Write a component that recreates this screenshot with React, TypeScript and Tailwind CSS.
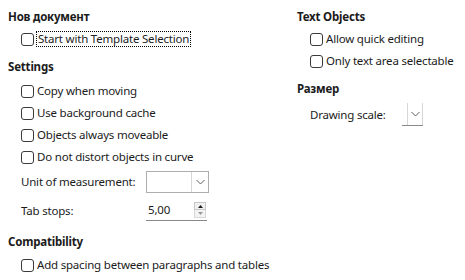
import React from 'react';

function Check({ label, focus = false }: { label: string; focus?: boolean }) {
  return (
    <div className="flex h-[22px] items-center pl-[13px]">
      <span className="h-[13px] w-[13px] shrink-0 rounded-[3px] border border-[#3a3a3a] bg-white" />
      {focus ? (
        <span className="ml-[2px] border border-dotted border-black px-[1px] leading-[14px]">{label}</span>
      ) : (
        <span className="ml-[3px]">{label}</span>
      )}
    </div>
  );
}

function Heading({ children, className = '' }: { children: React.ReactNode; className?: string }) {
  return <div className={`flex h-[22px] items-center font-bold ${className}`}>{children}</div>;
}

function Chevron() {
  return (
    <svg width="9" height="6" viewBox="0 0 9 6" className="text-[#606060]">
      <path d="M0.5 1 L4.5 5 L8.5 1" fill="none" stroke="currentColor" strokeWidth="1" />
    </svg>
  );
}

export default function App() {
  return (
    <div
      className="flex h-[280px] w-[465px] bg-white text-[11.5px] tracking-[-0.2px] text-[#1b1b1b]"
      style={{ fontFamily: '"Noto Sans", "Open Sans", sans-serif' }}
    >
      <div className="flex w-[289px] flex-col pl-2 pt-[6px]">
        <Heading>Нов документ</Heading>
        <Check label="Start with Template Selection" focus />
        <Heading className="mt-[6px]">Settings</Heading>
        <div className="mt-[2px]">
          <Check label="Copy when moving" />
          <Check label="Use background cache" />
          <Check label="Objects always moveable" />
          <Check label="Do not distort objects in curve" />
        </div>
        <div className="mt-[3px] flex h-[22px] items-center pl-[13px]">
          <span className="w-[125px]">Unit of measurement:</span>
          <div className="flex h-[22px] w-[63px] border border-[#adadad] bg-white">
            <div className="flex-1" />
            <div className="flex w-[17px] items-center justify-center border-l border-[#d6d6d6]">
              <Chevron />
            </div>
          </div>
        </div>
        <div className="mt-[7px] flex h-[21px] items-center pl-[13px]">
          <span className="w-[125px]">Tab stops:</span>
          <div className="flex h-[21px] w-[61px] items-center border-b border-[#8a8a8a] bg-white">
            <span className="flex-1 pl-[2px]">5,00</span>
            <div className="mr-[1px] flex w-[12px] flex-col">
              <div className="flex h-[8px] items-center justify-center border border-[#c8c8c8] bg-[#f0f0f0]">
                <svg width="5" height="3" viewBox="0 0 5 3">
                  <path d="M0 3 L2.5 0 L5 3 Z" fill="#1b1b1b" />
                </svg>
              </div>
              <div className="flex h-[8px] items-center justify-center border border-t-0 border-[#d8d8d8] bg-[#f3f3f3]">
                <svg width="5" height="3" viewBox="0 0 5 3">
                  <path d="M0 0 L2.5 3 L5 0 Z" fill="#9a9a9a" />
                </svg>
              </div>
            </div>
          </div>
        </div>
        <Heading className="mt-[10px]">Compatibility</Heading>
        <div className="mt-[1px]">
          <Check label="Add spacing between paragraphs and tables" />
        </div>
      </div>

      <div className="flex flex-1 flex-col pl-2 pt-[6px]">
        <Heading>Text Objects</Heading>
        <Check label="Allow quick editing" />
        <Check label="Only text area selectable" />
        <Heading className="mt-[6px]">Размер</Heading>
        <div className="mt-[3px] flex h-[23px] items-center pl-[13px]">
          <span className="w-[92px]">Drawing scale:</span>
          <div className="flex h-[23px] w-[21px] border-b border-[#8a8a8a] bg-white">
            <div className="w-[5px]" />
            <div className="flex flex-1 items-center justify-center border-x border-[#d6d6d6]">
              <Chevron />
            </div>
          </div>
        </div>
      </div>
    </div>
  );
}
